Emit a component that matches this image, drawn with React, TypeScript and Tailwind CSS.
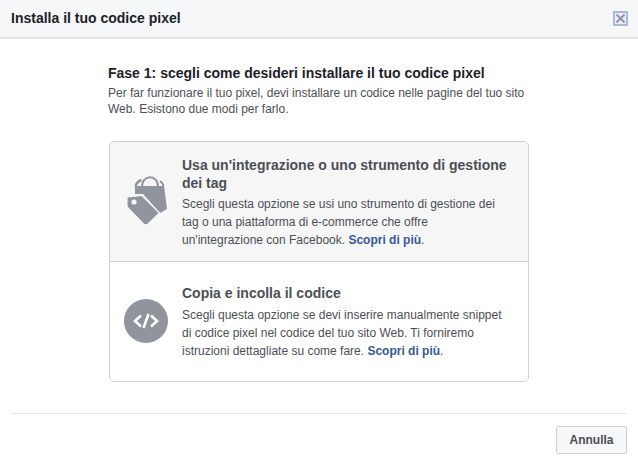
import React from 'react';

function TagsIcon() {
    return (
        <svg width="40" height="50" viewBox="0 0 40 50" className="shrink-0 mb-[4px]">
            {/* bag */}
            <path d="M8 11 H37 L40 34 L33 38 L16 19 L8 19 Z" fill="#90949c" />
            <path d="M8.5 11 C9.5 8 11.5 6 14.5 5" fill="none" stroke="#90949c" strokeWidth="2.5" />
            <path d="M15 12 C15 -1 31 -1 31 12" fill="none" stroke="#90949c" strokeWidth="2" />
            <path d="M33 6 C35 7.5 36 9 36.5 11" fill="none" stroke="#90949c" strokeWidth="2" />
            {/* tag */}
            <path d="M0 22 L15 20.5 L32.5 38 L21 49 Q18.5 50.5 16.5 49 L1 33 Q0 32 0 31 Z" fill="#90949c" stroke="#f6f6f7" strokeWidth="1.2" />
            <circle cx="7" cy="27" r="2.6" fill="#f6f6f7" />
        </svg>
    );
}

function CodeIcon() {
    return (
        <svg width="44" height="44" viewBox="0 0 44 44" className="shrink-0 mb-[2px]">
            <circle cx="22" cy="22" r="22" fill="#90949c" />
            <path d="M17 16.5 L11 22 L17 27.5 M27 16.5 L33 22 L27 27.5 M24.5 15 L19.5 29" fill="none" stroke="#fff" strokeWidth="2.6" />
        </svg>
    );
}

function MoreLink() {
    return <span className="font-bold text-[#365899]">Scopri di più</span>;
}

export default function App() {
    return (
        <div className="w-[638px] h-[465px] bg-white flex flex-col overflow-hidden font-['Liberation_Sans',Arial,sans-serif]">
            {/* Header */}
            <header className="h-[39px] shrink-0 bg-[#f6f7f9] border-b-2 border-[#e5e5e5] flex items-center justify-between pl-[11px] pr-[10px]">
                <h1 className="text-[14px] font-bold text-[#1d2129]">Installa il tuo codice pixel</h1>
                <div className="w-[15px] h-[15px] border-2 border-[#a4b9e6] bg-[#eceef3] flex items-center justify-center">
                    <svg width="9" height="9" viewBox="0 0 9 9">
                        <path d="M0.5 0.5 L8.5 8.5 M8.5 0.5 L0.5 8.5" stroke="#90949c" strokeWidth="2" />
                    </svg>
                </div>
            </header>

            {/* Body */}
            <main className="flex-1 pl-[108px] pr-[109px] pt-[25px]">
                <h2 className="text-[14px] leading-[18px] font-bold text-[#1d2129] whitespace-nowrap">Fase 1: scegli come desideri installare il tuo codice pixel</h2>
                <p className="text-[12px] leading-[16px] mt-[3px] text-[#4b4f56]">
                    Per far funzionare il tuo pixel, devi installare un codice nelle pagine del tuo sito
                    <br />
                    Web. Esistono due modi per farlo.
                </p>

                <div className="mt-[24px] ml-[1px] w-[420px] border border-[#ced0d4] rounded-[5px] overflow-hidden">
                    <div className="h-[120px] bg-[#f6f6f7] border-b border-[#ced0d4] flex items-center pl-[17px]">
                        <TagsIcon />
                        <div className="ml-[15px] pt-[2px]">
                            <h3 className="text-[14px] leading-[18px] font-bold text-[#4b4f56]">
                                Usa un'integrazione o uno strumento di gestione
                                <br />
                                dei tag
                            </h3>
                            <p className="text-[12px] leading-[18px] mt-[3px] text-[#4b4f56] whitespace-nowrap">
                                Scegli questa opzione se usi uno strumento di gestione dei
                                <br />
                                tag o una piattaforma di e-commerce che offre
                                <br />
                                un'integrazione con Facebook. <MoreLink />.
                            </p>
                        </div>
                    </div>
                    <div className="h-[119px] bg-white flex items-center pl-[14px]">
                        <CodeIcon />
                        <div className="ml-[14px] pt-[1px]">
                            <h3 className="text-[14px] leading-[18px] font-bold text-[#4b4f56]">Copia e incolla il codice</h3>
                            <p className="text-[12px] leading-[18px] mt-[4px] text-[#4b4f56] whitespace-nowrap">
                                Scegli questa opzione se devi inserire manualmente snippet
                                <br />
                                di codice pixel nel codice del tuo sito Web. Ti forniremo
                                <br />
                                istruzioni dettagliate su come fare. <MoreLink />.
                            </p>
                        </div>
                    </div>
                </div>
            </main>

            {/* Footer */}
            <footer className="shrink-0 mx-[11px] border-t border-[#e5e5e5] h-[52px] flex items-start justify-end pt-[12px]">
                <button className="h-[28px] w-[71px] bg-[#f6f7f9] border border-[#ced0d4] rounded-[2px] text-[12px] font-bold text-[#4b4f56]">Annulla</button>
            </footer>
        </div>
    );
}
